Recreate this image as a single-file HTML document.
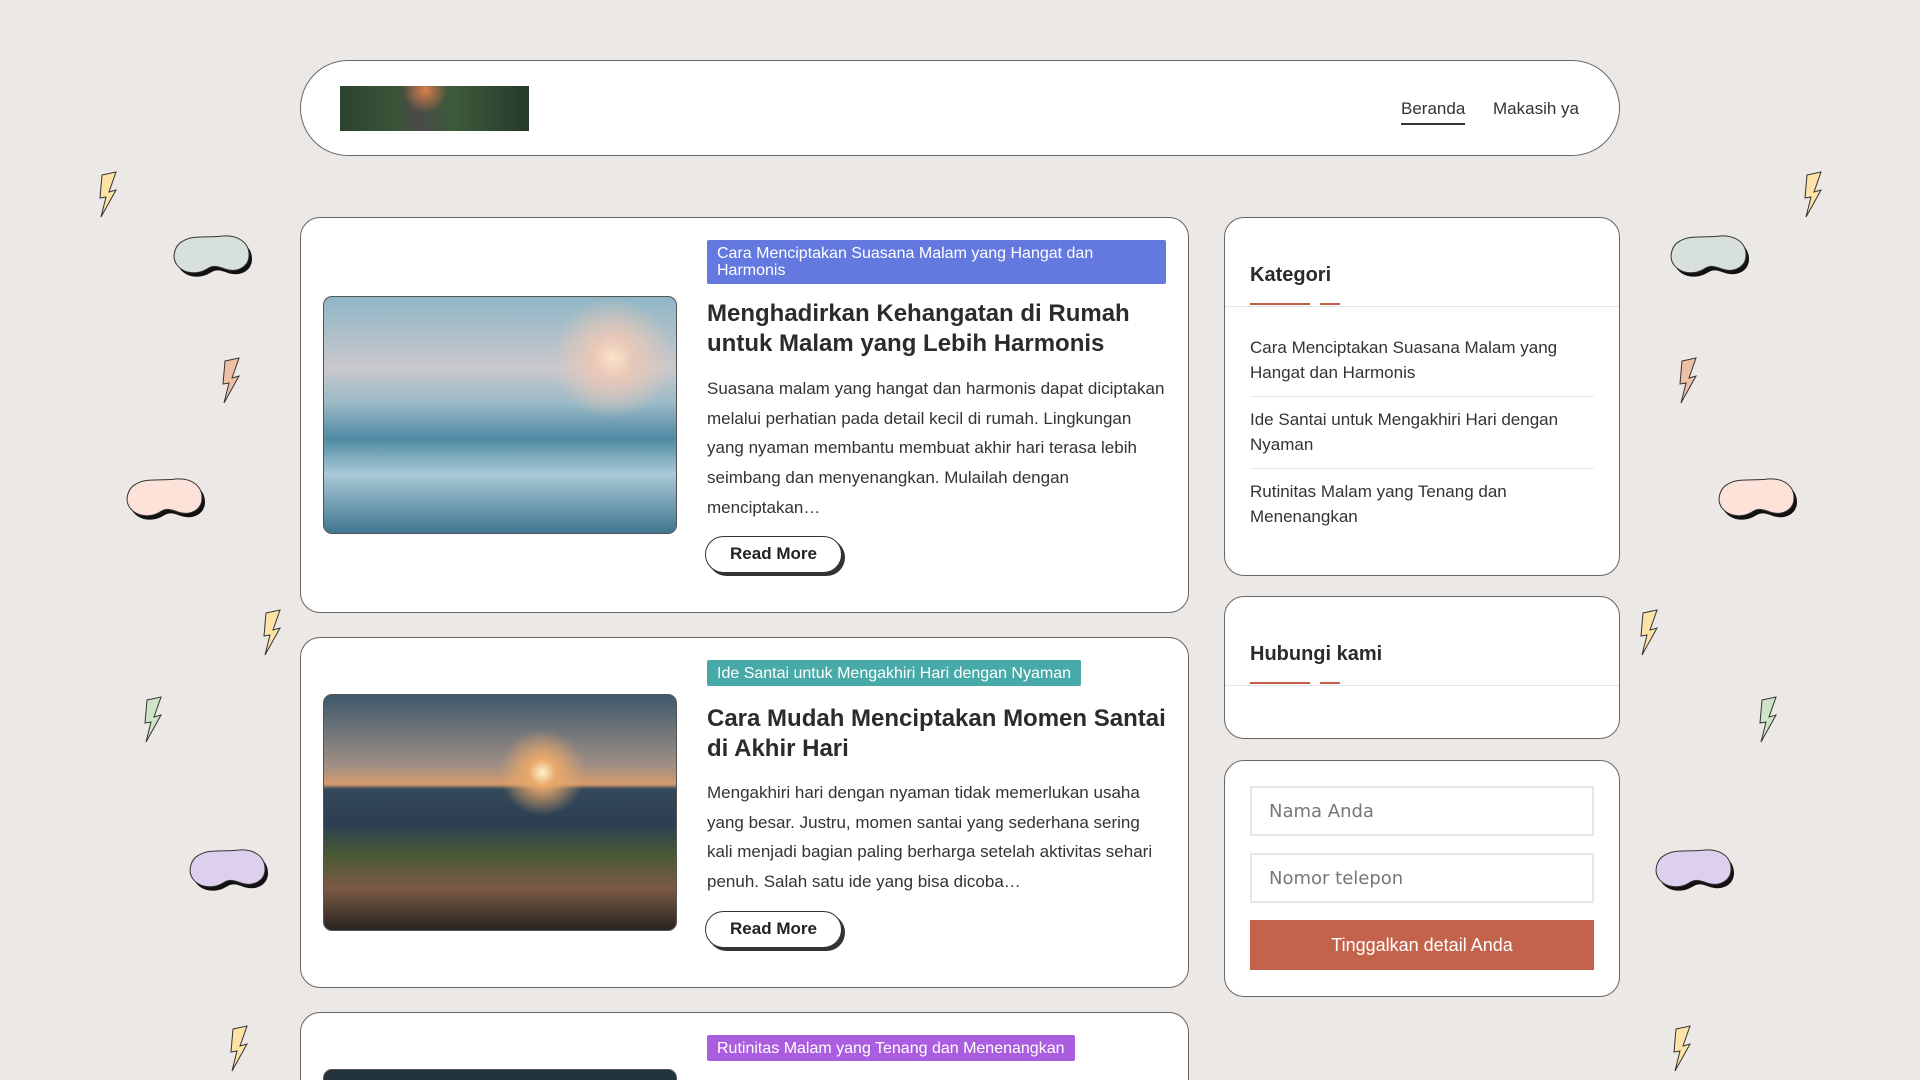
<!DOCTYPE html>
<html><head><meta charset="utf-8"><style>
*{box-sizing:border-box;margin:0;padding:0}
html,body{width:1920px;height:1080px;overflow:hidden}
body{background:#ebe8e5;font-family:"Liberation Sans",sans-serif;color:#333;position:relative}
.abs{position:absolute}
.header{left:300px;top:60px;width:1320px;height:96px;background:#fff;border:1.5px solid #666;border-radius:48px}
.logo{left:340px;top:86px;width:189px;height:45px;background:radial-gradient(circle at 45% 10%,#d9804a 0,transparent 20%),linear-gradient(90deg,#2c4330 0%,#3a5538 30%,#4a4a48 40%,#3d5a3b 60%,#26392c 100%)}
.nav{top:99px;font-size:17px;color:#333}
.card{background:#fff;border:1.5px solid #666;border-radius:20px}
.img{border-radius:9px;border:1px solid #555}
.tag{color:#fff;font-size:16px;line-height:17px;padding:5px 10px 4px;border-radius:2px}
.title{font-size:24px;font-weight:bold;line-height:30px;color:#2b2b2b;width:470px}
.ex{font-size:17px;line-height:29.7px;color:#333;width:462px}
.btn{width:137px;height:37px;border:1.5px solid #333;border-radius:19px;box-shadow:3px 3px 0 #333;background:#fff;font-weight:bold;font-size:17px;text-align:center;line-height:34px;color:#222}
.sh{font-size:20px;font-weight:bold;color:#2b2b2b}
.hr{height:1px;background:#e6e6e6}
.red{height:2px;background:#c55e49}
.cat{font-size:17px;line-height:25px;color:#333;left:1250px;width:330px}
.inp{left:1250px;width:344px;height:50px;border:2px solid #e6e6e6;font-family:"DejaVu Sans",sans-serif;font-size:18px;color:#777;padding-left:17px;line-height:47px}
</style></head><body>
<svg width="0" height="0" style="position:absolute"><defs>
<path id="bolt" d="M6 4 L20 1 L13 21 L20 19 L5 46 L10 26 L4 27 Z"/>
<path id="blob" d="M10 6 C20 0 32 3 50 1 C66 0 76 8 76 20 C76 32 64 38 52 34 C44 31 40 30 34 34 C26 39 12 40 4 30 C-2 22 2 10 10 6 Z"/>
</defs></svg>

<svg class="abs" style="left:96px;top:171px" width="24" height="48"><use href="#bolt" fill="#fde3a6" stroke="#333" stroke-width="1"/></svg>
<svg class="abs" style="left:219px;top:357px" width="24" height="48"><use href="#bolt" fill="#eec0a6" stroke="#333" stroke-width="1"/></svg>
<svg class="abs" style="left:260px;top:609px" width="24" height="48"><use href="#bolt" fill="#fde3a6" stroke="#333" stroke-width="1"/></svg>
<svg class="abs" style="left:141px;top:696px" width="24" height="48"><use href="#bolt" fill="#cfe3c8" stroke="#333" stroke-width="1"/></svg>
<svg class="abs" style="left:227px;top:1025px" width="24" height="48"><use href="#bolt" fill="#fde3a6" stroke="#333" stroke-width="1"/></svg>
<svg class="abs" style="left:1801px;top:171px" width="24" height="48"><use href="#bolt" fill="#fde3a6" stroke="#333" stroke-width="1"/></svg>
<svg class="abs" style="left:1676px;top:357px" width="24" height="48"><use href="#bolt" fill="#eec0a6" stroke="#333" stroke-width="1"/></svg>
<svg class="abs" style="left:1637px;top:609px" width="24" height="48"><use href="#bolt" fill="#fde3a6" stroke="#333" stroke-width="1"/></svg>
<svg class="abs" style="left:1756px;top:696px" width="24" height="48"><use href="#bolt" fill="#cfe3c8" stroke="#333" stroke-width="1"/></svg>
<svg class="abs" style="left:1670px;top:1025px" width="24" height="48"><use href="#bolt" fill="#fde3a6" stroke="#333" stroke-width="1"/></svg>

<svg class="abs" style="left:173px;top:235px" width="84" height="50"><use href="#blob" transform="translate(3,4)" fill="#111"/><use href="#blob" fill="#d8e0dc" stroke="#333" stroke-width="1"/></svg>
<svg class="abs" style="left:126px;top:478px" width="84" height="50"><use href="#blob" transform="translate(3,4)" fill="#111"/><use href="#blob" fill="#fde2da" stroke="#333" stroke-width="1"/></svg>
<svg class="abs" style="left:189px;top:849px" width="84" height="50"><use href="#blob" transform="translate(3,4)" fill="#111"/><use href="#blob" fill="#ddd0ee" stroke="#333" stroke-width="1"/></svg>
<svg class="abs" style="left:1670px;top:235px" width="84" height="50"><use href="#blob" transform="translate(3,4)" fill="#111"/><use href="#blob" fill="#d8e0dc" stroke="#333" stroke-width="1"/></svg>
<svg class="abs" style="left:1718px;top:478px" width="84" height="50"><use href="#blob" transform="translate(3,4)" fill="#111"/><use href="#blob" fill="#fde2da" stroke="#333" stroke-width="1"/></svg>
<svg class="abs" style="left:1655px;top:849px" width="84" height="50"><use href="#blob" transform="translate(3,4)" fill="#111"/><use href="#blob" fill="#ddd0ee" stroke="#333" stroke-width="1"/></svg>

<div class="abs header"></div>
<div class="abs logo"></div>
<div class="abs nav" style="left:1401px">Beranda</div>
<div class="abs" style="left:1401px;top:123px;width:64px;height:2px;background:#333"></div>
<div class="abs nav" style="left:1493px">Makasih ya</div>

<div class="abs card" style="left:300px;top:217px;width:889px;height:396px"></div>
<div class="abs img" style="left:323px;top:296px;width:354px;height:238px;background:radial-gradient(circle at 82% 26%,#fbe3c8 0,#e8c8b8 6%,transparent 18%),linear-gradient(180deg,#8fb6c6 0%,#c9c8cc 30%,#9bbac6 45%,#4f8aa3 60%,#a9c9d6 75%,#3f7590 100%)"></div>
<div class="abs tag" style="left:707px;top:240px;width:459px;height:44px;background:#6379e0">Cara Menciptakan Suasana Malam yang Hangat dan Harmonis</div>
<div class="abs title" style="left:707px;top:299px">Menghadirkan Kehangatan di Rumah untuk Malam yang Lebih Harmonis</div>
<div class="abs ex" style="left:707px;top:374px">Suasana malam yang hangat dan harmonis dapat diciptakan melalui perhatian pada detail kecil di rumah. Lingkungan yang nyaman membantu membuat akhir hari terasa lebih seimbang dan menyenangkan. Mulailah dengan menciptakan…</div>
<div class="abs btn" style="left:705px;top:536px">Read More</div>

<div class="abs card" style="left:300px;top:637px;width:889px;height:351px"></div>
<div class="abs img" style="left:323px;top:694px;width:354px;height:237px;background:radial-gradient(circle at 62% 33%,#fff2c8 0,#e9a86a 5%,transparent 16%),linear-gradient(180deg,#3e5a6c 0%,#a08f85 30%,#d79a6a 38%,#34495a 40%,#2c3f52 55%,#4a5a35 68%,#7b5a45 82%,#2a2420 100%)"></div>
<div class="abs tag" style="left:707px;top:660px;background:#48aaa8">Ide Santai untuk Mengakhiri Hari dengan Nyaman</div>
<div class="abs title" style="left:707px;top:704px">Cara Mudah Menciptakan Momen Santai di Akhir Hari</div>
<div class="abs ex" style="left:707px;top:778px;width:450px">Mengakhiri hari dengan nyaman tidak memerlukan usaha yang besar. Justru, momen santai yang sederhana sering kali menjadi bagian paling berharga setelah aktivitas sehari penuh. Salah satu ide yang bisa dicoba…</div>
<div class="abs btn" style="left:705px;top:911px">Read More</div>

<div class="abs card" style="left:300px;top:1012px;width:889px;height:68px;border-bottom:none;border-radius:20px 20px 0 0"></div>
<div class="abs img" style="left:323px;top:1069px;width:354px;height:11px;background:#23343c;border-bottom:none;border-radius:9px 9px 0 0"></div>
<div class="abs tag" style="left:707px;top:1035px;background:#ab5ddf">Rutinitas Malam yang Tenang dan Menenangkan</div>

<div class="abs card" style="left:1224px;top:217px;width:396px;height:359px"></div>
<div class="abs sh" style="left:1250px;top:264px">Kategori</div>
<div class="abs hr" style="left:1225px;top:306px;width:394px"></div>
<div class="abs red" style="left:1250px;top:303px;width:60px"></div>
<div class="abs red" style="left:1320px;top:303px;width:20px"></div>
<div class="abs cat" style="top:335px">Cara Menciptakan Suasana Malam yang Hangat dan Harmonis</div>
<div class="abs hr" style="left:1250px;top:396px;width:344px"></div>
<div class="abs cat" style="top:407px">Ide Santai untuk Mengakhiri Hari dengan Nyaman</div>
<div class="abs hr" style="left:1250px;top:468px;width:344px"></div>
<div class="abs cat" style="top:479px">Rutinitas Malam yang Tenang dan Menenangkan</div>

<div class="abs card" style="left:1224px;top:596px;width:396px;height:143px"></div>
<div class="abs sh" style="left:1250px;top:643px">Hubungi kami</div>
<div class="abs hr" style="left:1225px;top:685px;width:394px"></div>
<div class="abs red" style="left:1250px;top:682px;width:60px"></div>
<div class="abs red" style="left:1320px;top:682px;width:20px"></div>

<div class="abs card" style="left:1224px;top:760px;width:396px;height:237px"></div>
<div class="abs inp" style="top:786px">Nama Anda</div>
<div class="abs inp" style="top:853px">Nomor telepon</div>
<div class="abs" style="left:1250px;top:920px;width:344px;height:50px;background:#c4634b;color:#fff;font-size:18px;text-align:center;line-height:50px">Tinggalkan detail Anda</div>
</body></html>
